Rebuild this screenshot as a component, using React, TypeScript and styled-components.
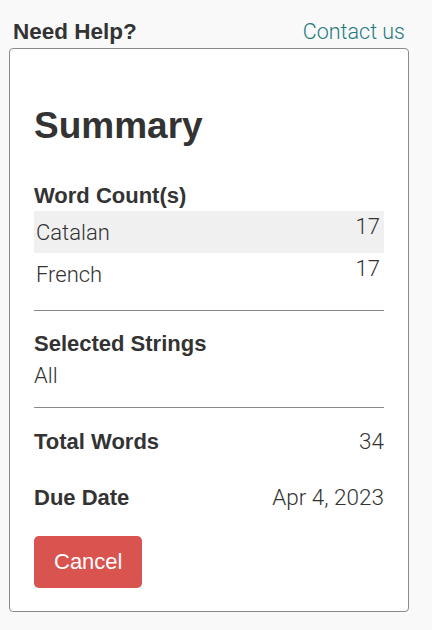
import React from 'react';
import styled, { createGlobalStyle } from 'styled-components';

type CountRow = {
  language: string;
  count: number;
};

const GlobalStyle = createGlobalStyle`
  html,
  body {
    margin: 0;
    padding: 0;
    background: #f9f9f9;
  }
  body {
    font-family: 'Liberation Sans', Arial, sans-serif;
    color: #333333;
  }
`;

const Page = styled.div`
  width: 432px;
  min-height: 630px;
  box-sizing: border-box;
`;
const HelpBar = styled.div`
  display: flex;
  justify-content: space-between;
  align-items: baseline;
  padding: 19px 27px 0 13px;
`;
const HelpTitle = styled.div`
  font-size: 22.5px;
  line-height: 26px;
  font-weight: 700;
  color: #333333;
`;
const ContactLink = styled.a`
  font-family: Roboto, 'Liberation Sans', sans-serif;
  font-weight: 300;
  font-size: 21.5px;
  line-height: 26px;
  color: #1f7b7c;
  text-decoration: none;
  cursor: pointer;
`;
const SummaryCard = styled.div`
  margin: 3px 0 0 9px;
  width: 400px;
  box-sizing: border-box;
  background: #ffffff;
  border: 1px solid #8a8a8a;
  border-radius: 4px;
  padding: 55px 24px 23px;
`;
const SummaryTitle = styled.h1`
  margin: 0;
  font-size: 37px;
  line-height: 44px;
  font-weight: 700;
  color: #333333;
`;
const SectionLabel = styled.div<{ $top: number }>`
  margin-top: ${(p) => p.$top}px;
  font-size: 22px;
  line-height: 26px;
  font-weight: 700;
  color: #333333;
`;
const CountList = styled.div`
  margin-top: 2px;
`;
const CountItem = styled.div<{ $shaded: boolean }>`
  display: flex;
  justify-content: space-between;
  align-items: flex-start;
  height: 42px;
  padding: 0 4px 0 2px;
  background: ${(p) => (p.$shaded ? '#f0f0f0' : 'transparent')};
`;
const LightText = styled.span`
  font-family: Roboto, 'Liberation Sans', sans-serif;
  font-weight: 300;
  font-size: 22px;
  line-height: 26px;
  color: #333333;
`;
const LanguageName = styled(LightText)`
  margin-top: 9px;
`;
const LanguageCount = styled(LightText)`
  margin-top: 3px;
`;
const Divider = styled.hr<{ $top: number }>`
  margin: ${(p) => p.$top}px 0 0;
  border: none;
  border-top: 1px solid #8a8a8a;
  height: 0;
`;
const PlainValue = styled(LightText)<{ $top: number }>`
  display: block;
  margin-top: ${(p) => p.$top}px;
`;
const DetailRow = styled.div<{ $top: number }>`
  display: flex;
  justify-content: space-between;
  align-items: baseline;
  height: 26px;
  margin-top: ${(p) => p.$top}px;
`;
const DetailLabel = styled.span`
  font-size: 22px;
  line-height: 26px;
  font-weight: 700;
`;
const DetailValue = styled(LightText)`
  font-size: 22.5px;
`;
const CancelButton = styled.button`
  margin-top: 26px;
  height: 52px;
  padding: 0 20px;
  border: none;
  border-radius: 5px;
  background: #d9534f;
  color: #ffffff;
  font-family: 'Liberation Sans', Arial, sans-serif;
  font-size: 22px;
  line-height: 26px;
  cursor: pointer;
`;

const counts: CountRow[] = [
  { language: 'Catalan', count: 17 },
  { language: 'French', count: 17 },
];

function App() {
  const total = counts.reduce((sum, row) => sum + row.count, 0);

  return (
    <Page>
      <GlobalStyle />
      <HelpBar>
        <HelpTitle>Need Help?</HelpTitle>
        <ContactLink>Contact us</ContactLink>
      </HelpBar>
      <SummaryCard>
        <SummaryTitle>Summary</SummaryTitle>
        <SectionLabel $top={35}>Word Count(s)</SectionLabel>
        <CountList>
          {counts.map((row, index) => (
            <CountItem key={row.language} $shaded={index === 0}>
              <LanguageName>{row.language}</LanguageName>
              <LanguageCount>{row.count}</LanguageCount>
            </CountItem>
          ))}
        </CountList>
        <Divider $top={15} />
        <SectionLabel $top={20}>Selected Strings</SectionLabel>
        <PlainValue $top={6}>All</PlainValue>
        <Divider $top={18} />
        <DetailRow $top={20}>
          <DetailLabel>Total Words</DetailLabel>
          <DetailValue>{total}</DetailValue>
        </DetailRow>
        <DetailRow $top={30}>
          <DetailLabel>Due Date</DetailLabel>
          <DetailValue>Apr 4, 2023</DetailValue>
        </DetailRow>
        <CancelButton>Cancel</CancelButton>
      </SummaryCard>
    </Page>
  );
}

export default App;
